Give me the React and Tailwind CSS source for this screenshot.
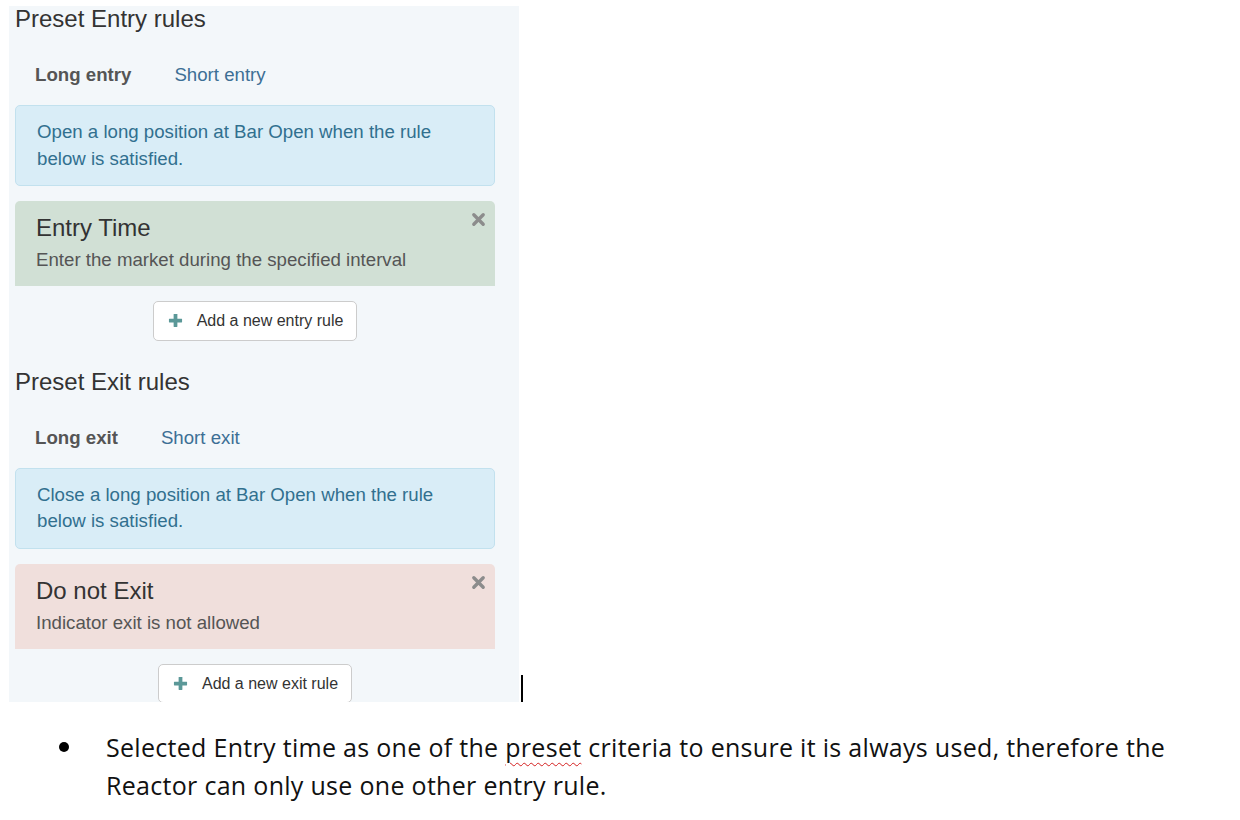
import React from 'react';

const CloseIcon = () => (
  <svg viewBox="0 0 16 16" className="h-[15px] w-[15px]">
    <path d="M3 3 L13 13 M13 3 L3 13" stroke="#8c8c8c" strokeWidth="3.6" strokeLinecap="round" fill="none" />
  </svg>
);

const PlusIcon = () => (
  <svg viewBox="0 0 16 16" className="h-[15px] w-[15px]">
    <rect x="6" y="1" width="4" height="14" rx="0.5" fill="#5b9898" />
    <rect x="1" y="6" width="14" height="4" rx="0.5" fill="#5b9898" />
  </svg>
);

function RuleSection({ title, active, other, info, rule, ruleBg, button, first }) {
  return (
    <div className={first ? '' : 'mt-[28px]'}>
      <h4 className="text-[24px] leading-[26px] text-[#333]">{title}</h4>
      <ul className="mt-[16px] flex gap-[3px]">
        <li className="px-[20px] py-[13px] text-[18.67px] font-bold leading-[27px] text-[#555]">{active}</li>
        <li className="px-[20px] py-[13px] text-[18.67px] leading-[27px] text-[#3d6f95]">{other}</li>
      </ul>
      <div className="mt-[4px] rounded-[5px] border border-[#c2e1ee] bg-[#d9edf7] px-[21px] py-[13px] text-[18.67px] leading-[26.67px] text-[#31708f]">
        {info}
      </div>
      <div className={`relative mt-[15px] rounded-t-[5px] px-[21px] pb-[12.3px] pt-[14px] ${ruleBg}`}>
        <span className="absolute right-[9px] top-[11px]">
          <CloseIcon />
        </span>
        <div className="text-[24px] leading-[26px] text-[#333]">{rule.name}</div>
        <div className="mt-[6px] text-[18.67px] leading-[26.67px] text-[#555]">{rule.desc}</div>
      </div>
      <div className="mt-[15px] flex justify-center">
        <button className="flex items-center rounded-[5px] border border-[#cccccc] bg-white py-[6.67px] pl-[14px] pr-[13px] text-[16px] leading-[24px] text-[#333]">
          <PlusIcon />
          <span className="ml-[14px]">{button}</span>
        </button>
      </div>
    </div>
  );
}

export default function App() {
  return (
    <div className="min-h-[820px] w-[1240px] bg-white">
      <div className="flex items-end pl-[9px] pt-[6px]">
        <div className="h-[696px] w-[510px] overflow-hidden bg-[#f3f7fa] pl-[6px] pr-[24px] font-['Liberation_Sans',Arial,sans-serif]">
          <RuleSection
            first
            title="Preset Entry rules"
            active="Long entry"
            other="Short entry"
            info="Open a long position at Bar Open when the rule below is satisfied."
            rule={{ name: 'Entry Time', desc: 'Enter the market during the specified interval' }}
            ruleBg="bg-[#d1e0d5]"
            button="Add a new entry rule"
          />
          <RuleSection
            title="Preset Exit rules"
            active="Long exit"
            other="Short exit"
            info="Close a long position at Bar Open when the rule below is satisfied."
            rule={{ name: 'Do not Exit', desc: 'Indicator exit is not allowed' }}
            ruleBg="bg-[#f0dfdc]"
            button="Add a new exit rule"
          />
        </div>
        <div className="ml-[2px] h-[27px] w-[2px] bg-black" />
      </div>

      <ul className="mt-[26px] font-['Open_Sans','Liberation_Sans',sans-serif] text-[25px] leading-[38px] tracking-[0.3px] text-[#111]">
        <li className="flex">
          <span className="flex w-[106px] shrink-0 justify-start pl-[59px]">
            <span className="mt-[14px] h-[10px] w-[10px] rounded-full bg-black" />
          </span>
          <span className="whitespace-nowrap">
            Selected Entry time as one of the{' '}
            <span className="underline decoration-[#d42020] decoration-wavy decoration-1 underline-offset-[5px]">preset</span>{' '}
            criteria to ensure it is always used, therefore the
            <br />
            Reactor can only use one other entry rule.
          </span>
        </li>
      </ul>
    </div>
  );
}
